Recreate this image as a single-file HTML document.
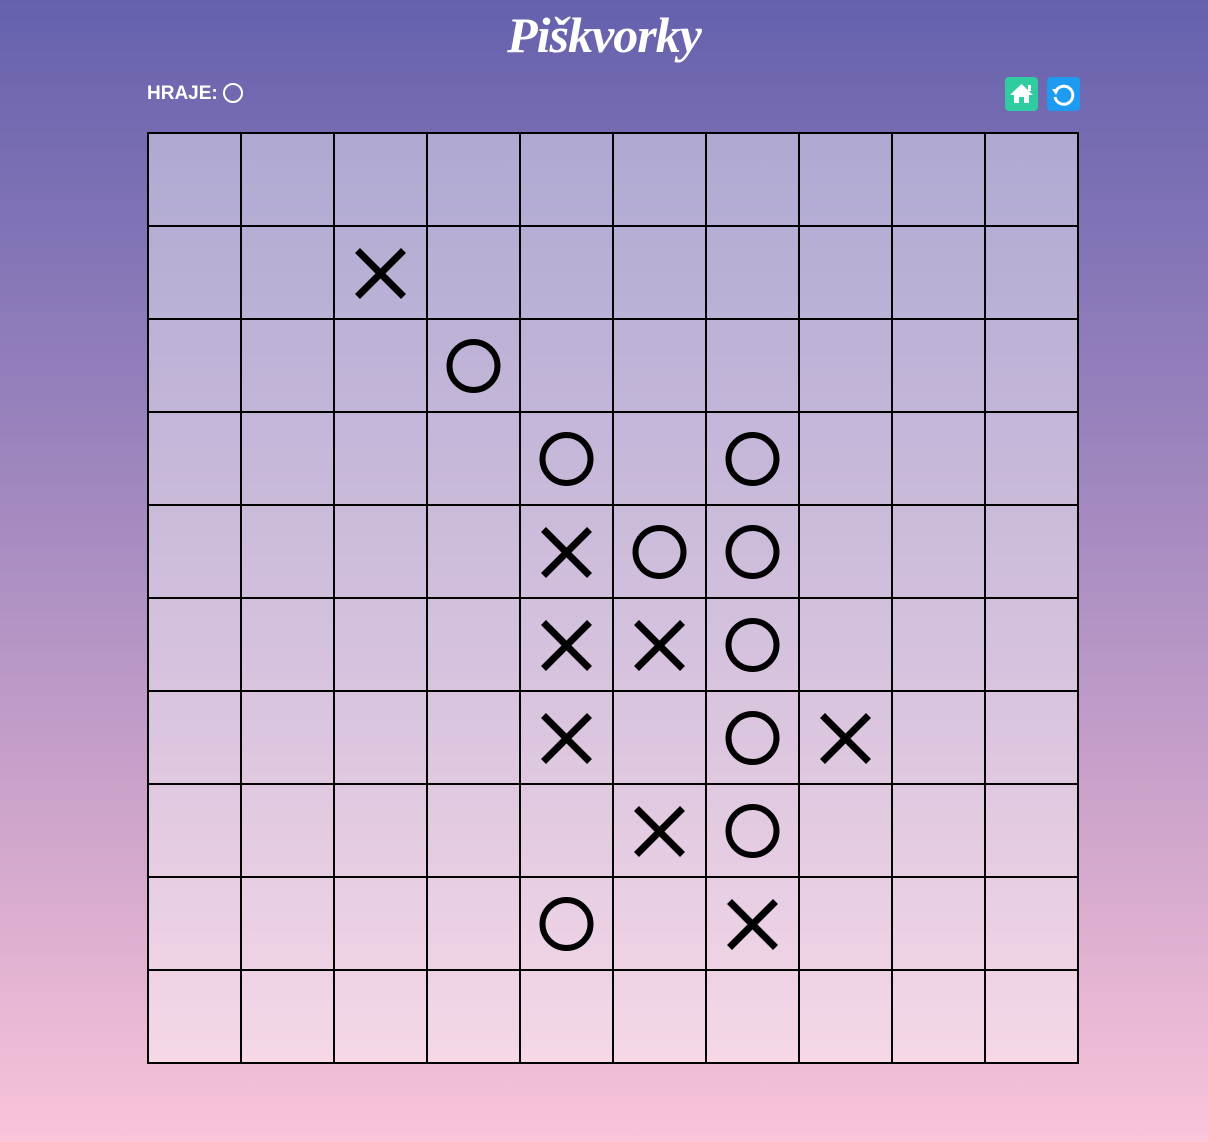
<!DOCTYPE html>
<html><head><meta charset="utf-8"><style>
html,body{margin:0;padding:0}
body{width:1208px;height:1142px;background:linear-gradient(#6561ad 0%,#9d85be 40%,#d3a8cd 75%,#fac4da 100%);font-family:"Liberation Sans",sans-serif;position:relative;overflow:hidden}
h1{position:absolute;left:0;width:1208px;top:6px;margin:0;text-align:center;color:#fff;font:italic bold 50px "Liberation Serif",serif;letter-spacing:-1px}
.hr{position:absolute;left:147px;top:83px;color:#fff;font-weight:bold;font-size:19px}
.hr span{display:inline-block;width:16px;height:16px;border:2px solid #fff;border-radius:50%;vertical-align:-4px;margin-left:5px}
.btn{position:absolute;top:77px;width:33px;height:34px;border-radius:4px}
</style></head><body>
<h1>Piškvorky</h1>
<div class="hr">HRAJE:<span></span></div>
<div class="btn" style="left:1005px;background:#2ecc9f"><svg width="33" height="34"><path d="M5 18 L16.5 7 L28 18 Z" fill="#fff"/><rect x="23" y="8" width="3" height="6" fill="#fff"/><path d="M9 17 H24 V26 H19 V20 H14 V26 H9 Z" fill="#fff"/></svg></div>
<div class="btn" style="left:1047px;background:#1e9af0"><svg width="33" height="34"><path d="M9.5 13 A9 9 0 1 1 8 20" fill="none" stroke="#fff" stroke-width="3"/><path d="M5 12 L12 12 L9 18 Z" fill="#fff"/></svg></div>
<svg style="position:absolute;left:0;top:0" width="1208" height="1142">
<g id="g"></g>
</svg>
<script>
var s='';
for(var r=0;r<10;r++)for(var c=0;c<10;c++){s+='<rect x="'+(148+c*93)+'" y="'+(133+r*93)+'" width="93" height="93" fill="rgba(255,255,255,0.42)" stroke="#000" stroke-width="2"/>';}
var X=[[1,2],[4,4],[5,4],[5,5],[6,4],[6,7],[7,5],[8,6]],O=[[2,3],[3,4],[3,6],[4,5],[4,6],[5,6],[6,6],[7,6],[8,4]];
X.forEach(function(p){var cx=148+p[1]*93+46.5,cy=133+p[0]*93+47.5;s+='<path d="M'+(cx-23)+' '+(cy-23)+'L'+(cx+23)+' '+(cy+23)+'M'+(cx+23)+' '+(cy-23)+'L'+(cx-23)+' '+(cy+23)+'" stroke="#000" stroke-width="7"/>';});
O.forEach(function(p){var cx=148+p[1]*93+46.5,cy=133+p[0]*93+47;s+='<circle cx="'+cx+'" cy="'+cy+'" r="24" fill="none" stroke="#000" stroke-width="6"/>';});
document.getElementById('g').innerHTML=s;
</script>
</body></html>
